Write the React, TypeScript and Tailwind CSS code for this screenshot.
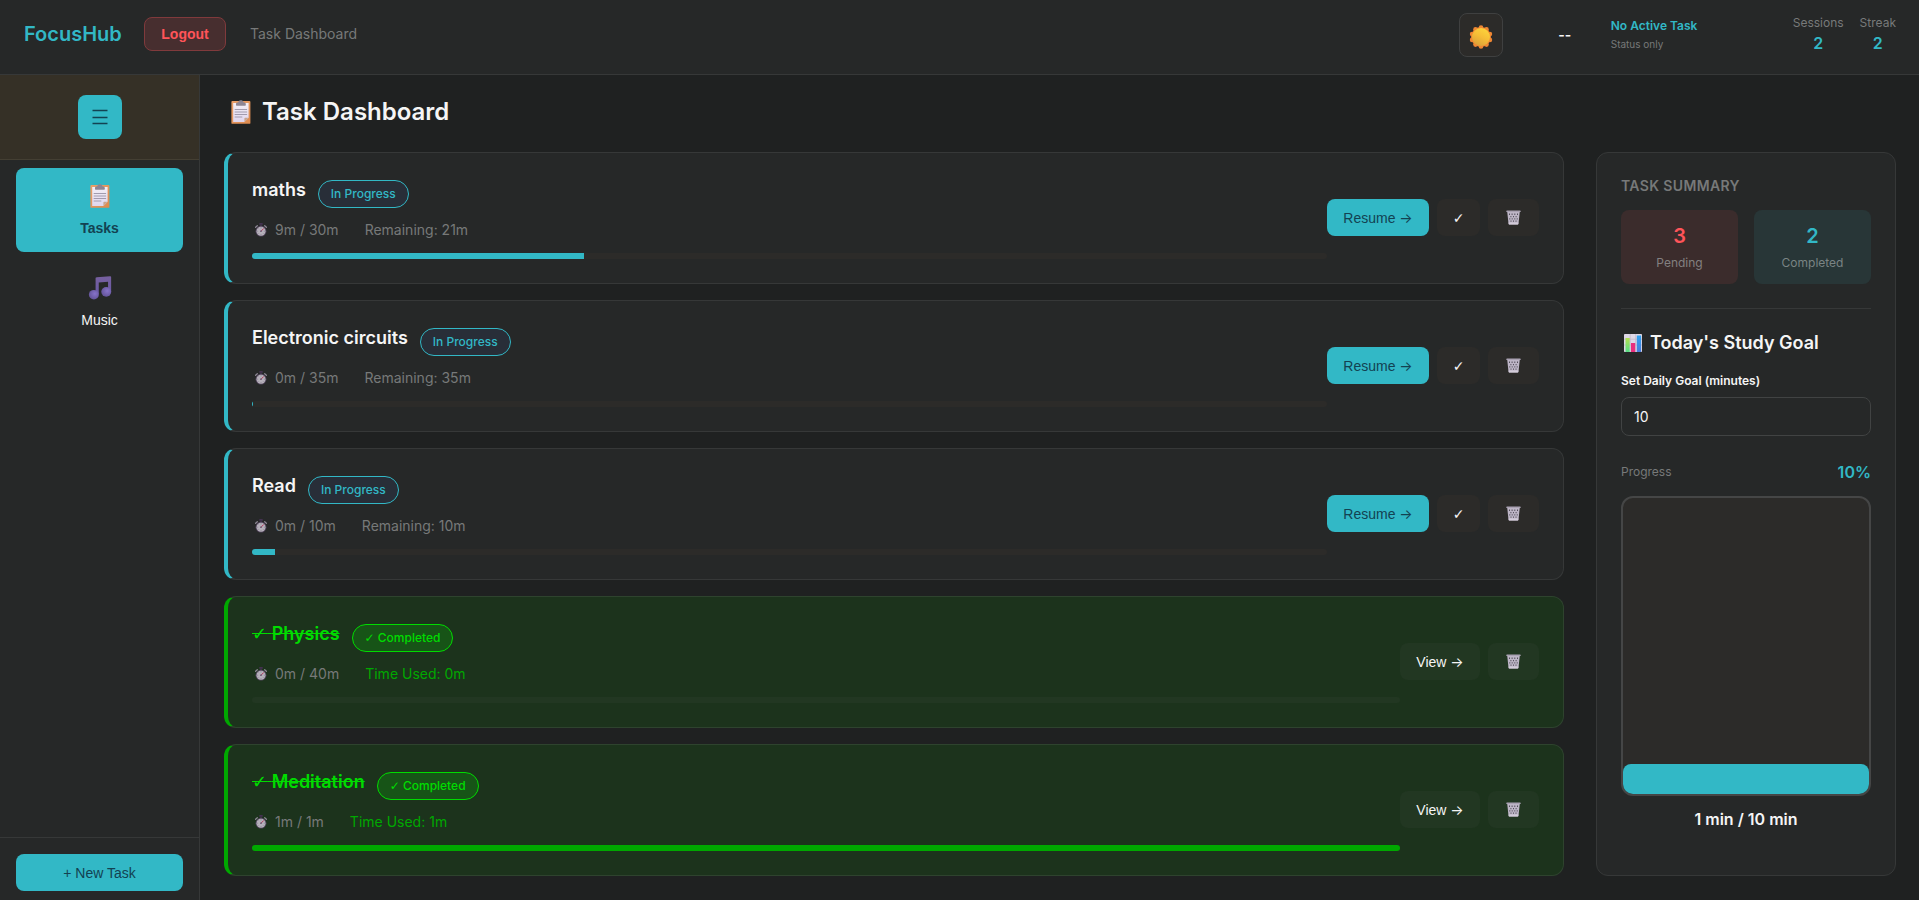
import React, { useState } from 'react';
import clsx from 'clsx';

interface IconProps {
  className?: string;
}

interface Task {
  id: number;
  name: string;
  spent: number;
  total: number;
  percent: number;
  done: boolean;
}

const TASKS: Task[] = [
  { id: 1, name: 'maths', spent: 9, total: 30, percent: 30.9, done: false },
  { id: 2, name: 'Electronic circuits', spent: 0, total: 35, percent: 0.1, done: false },
  { id: 3, name: 'Read', spent: 0, total: 10, percent: 2.1, done: false },
  { id: 4, name: 'Physics', spent: 0, total: 40, percent: 0, done: true },
  { id: 5, name: 'Meditation', spent: 1, total: 1, percent: 100, done: true },
];

function ClipboardIcon({ className }: IconProps) {
  return (
    <svg viewBox="0 0 20 24" className={className} aria-hidden="true">
      <defs>
        <linearGradient id="board" x1="0" y1="0" x2="1" y2="1">
          <stop offset="0" stopColor="#e9a06a" />
          <stop offset="1" stopColor="#dd8a4e" />
        </linearGradient>
        <linearGradient id="sheet" x1="0" y1="0" x2="0" y2="1">
          <stop offset="0" stopColor="#f3eff6" />
          <stop offset="1" stopColor="#e0d6ee" />
        </linearGradient>
      </defs>
      <rect x="0.4" y="1" width="19" height="22.8" rx="0.9" fill="url(#board)" />
      <path d="M2.2 3h15.4v14.8L13.4 22H2.2z" fill="url(#sheet)" />
      <path d="M17.6 17.8L13.4 22v-3.4c0-.5.3-.8.8-.8z" fill="#c9a58f" />
      <path d="M5 4.2c0-1.4.7-1.8 2.4-1.9C7.6.9 8.6.3 9.9.3s2.3.6 2.5 2c1.7.1 2.4.5 2.4 1.9v.9c0 .4-.2.6-.6.6H5.600c-.4 0-.6-.2-.6-.6z" fill="#8d8593" />
      <path d="M3.700 9.500h12.400M3.700 12h12.400M3.700 14.500h12.400M3.700 17h7.600" stroke="#9a93a6" strokeWidth="0.9" />
    </svg>
  );
}

function MusicIcon({ className }: IconProps) {
  return (
    <svg viewBox="0 0 24 25" className={className} aria-hidden="true">
      <defs>
        <linearGradient id="note" x1="0" y1="0" x2="0" y2="1">
          <stop offset="0" stopColor="#76609f" />
          <stop offset="1" stopColor="#6a5aa6" />
        </linearGradient>
        <radialGradient id="head" cx="0.6" cy="0.4" r="0.7">
          <stop offset="0" stopColor="#8672c9" />
          <stop offset="1" stopColor="#5f5093" />
        </radialGradient>
      </defs>
      <path d="M7.400 2.700c0-.8.4-1.200 1.200-1.300L22.400.3c.7 0 1.200.3 1.200 1v15h-3.200V6L10.700 6.900v12H7.400z" fill="url(#note)" />
      <ellipse cx="5.600" cy="19.500" rx="5.200" ry="5" fill="url(#head)" />
      <ellipse cx="18.500" cy="16.500" rx="5.200" ry="5" fill="url(#head)" />
    </svg>
  );
}

function SunIcon({ className }: IconProps) {
  return (
    <svg viewBox="0 0 24 24" className={className} aria-hidden="true">
      <defs>
        <linearGradient id="disc" x1="0.8" y1="0" x2="0.3" y2="1">
          <stop offset="0" stopColor="#fcd63c" />
          <stop offset="0.5" stopColor="#f6bd36" />
          <stop offset="1" stopColor="#dba03a" />
        </linearGradient>
      </defs>
      <g fill="#f08733">
        <circle cx="12" cy="12" r="10" />
        <circle cx="12" cy="2.600" r="2.300" />
        <circle cx="17.500" cy="4.400" r="2.300" />
        <circle cx="20.900" cy="9.100" r="2.300" />
        <circle cx="20.900" cy="14.900" r="2.300" />
        <circle cx="17.500" cy="19.600" r="2.300" />
        <circle cx="12" cy="21.400" r="2.300" />
        <circle cx="6.500" cy="19.600" r="2.300" />
        <circle cx="3.100" cy="14.900" r="2.300" />
        <circle cx="3.100" cy="9.100" r="2.300" />
        <circle cx="6.500" cy="4.400" r="2.300" />
      </g>
      <circle cx="12" cy="12" r="9" fill="url(#disc)" />
    </svg>
  );
}

function StopwatchIcon({ className }: IconProps) {
  return (
    <svg viewBox="0 0 12 14" className={className} aria-hidden="true">
      <rect x="4.200" y="0" width="3.600" height="1.700" rx="0.500" fill="#43324f" />
      <path d="M5.300 1.500h1.400v1.700H5.300z" fill="#43324f" />
      <path d="M.6 4.200l1.700-1.500M11.400 4.200L9.700 2.700" stroke="#8b8593" strokeWidth="1.300" strokeLinecap="round" />
      <circle cx="6" cy="8.200" r="5.400" fill="#54475f" />
      <circle cx="6" cy="8.200" r="4.500" fill="#b5b0ba" />
      <path d="M6 4.300v1M6 11.100v1M2.100 8.200h1M8.900 8.200h1M3.300 5.500l.6.600M3.300 10.900l.6-.6M8.700 10.900l-.6-.6" stroke="#7b7484" strokeWidth="0.600" />
      <path d="M6 8.200l2.500-2.500" stroke="#b8385a" strokeWidth="1" strokeLinecap="round" />
      <circle cx="6" cy="8.200" r="0.900" fill="#6b5f77" />
    </svg>
  );
}

function TrashIcon({ className }: IconProps) {
  return (
    <svg viewBox="0 0 15 15" className={className} aria-hidden="true">
      <path d="M1.200 1.500h12.600l-1.300 12.300c0 .5-.4.7-.8.7H3.300c-.4 0-.8-.2-.8-.7z" fill="#bdb5c6" />
      <rect x="0.300" y="0.400" width="14.400" height="1.700" rx="0.700" fill="#aaa2b3" />
      <g fill="#55505c">
        <path d="M3 3.600h1v1.300H3zM5.600 3.600h1v1.300h-1zM8.300 3.600h1v1.300h-1zM11 3.600h1v1.300h-1z" />
        <path d="M4.400 5.900h1v1.300h-1zM7 5.900h1v1.300H7zM9.600 5.900h1v1.300h-1z" />
        <path d="M3.300 8.200h1v1.300h-1zM5.700 8.200h1v1.300h-1zM8.300 8.200h1v1.300h-1zM10.700 8.200h1v1.300h-1z" />
        <path d="M4.500 10.500h1v1.300h-1zM7 10.500h1v1.300H7zM9.500 10.500h1v1.300h-1z" />
      </g>
      <path d="M2.600 12.600h9.800l-.2 1.300c0 .4-.3.600-.7.600h-8c-.4 0-.7-.2-.7-.6z" fill="#d3ccda" />
    </svg>
  );
}

function ChartIcon({ className }: IconProps) {
  return (
    <svg viewBox="0 0 18 18" className={className} aria-hidden="true">
      <defs>
        <linearGradient id="green" x1="0" y1="0" x2="0" y2="1">
          <stop offset="0" stopColor="#b5e051" />
          <stop offset="1" stopColor="#55dc86" />
        </linearGradient>
        <linearGradient id="blue" x1="0" y1="0" x2="0" y2="1">
          <stop offset="0" stopColor="#2ea3f0" />
          <stop offset="1" stopColor="#4b7bdb" />
        </linearGradient>
      </defs>
      <rect width="18" height="18" rx="0.800" fill="#ded8e6" />
      <path d="M0 5.200h18M0 11h18M6.200 0v18M11.700 0v18" stroke="#bdb5c9" strokeWidth="0.700" />
      <rect x="1.500" y="4" width="4.200" height="14" fill="url(#green)" />
      <rect x="7" y="9" width="4.200" height="9" fill="#ea2f7d" />
      <rect x="12.800" y="1.500" width="4.300" height="16.500" fill="url(#blue)" />
    </svg>
  );
}

function Check() {
  return <span className="font-['DejaVu_Sans',sans-serif] font-normal">✓</span>;
}

function Arrow() {
  return <span className="font-['Inter',sans-serif]">→</span>;
}

function Stat({ label, value }: { label: string; value: number }) {
  return (
    <div className="text-center">
      <div className="text-xs text-[#787a7a]">{label}</div>
      <div className="text-base leading-6 font-semibold text-[#32b8c6]">{value}</div>
    </div>
  );
}

function TaskCard({ task }: { task: Task }) {
  const buttonBg = task.done ? 'bg-[#223722]' : 'bg-[#2c2b29]';

  return (
    <li
      className={clsx(
        'flex items-center rounded-xl border border-l-4 p-6',
        task.done
          ? 'bg-[#1c331c] border-[#2e432e] border-l-[#00a800]'
          : 'bg-[#262828] border-[#363838] border-l-[#32b8c6]'
      )}
    >
      <div className="flex-1">
        <div className="flex items-start gap-3">
          <h3
            className={clsx(
              'text-lg leading-[26px] font-semibold',
              task.done ? 'text-[#00dc00] line-through' : 'text-[#f5f5f5]'
            )}
          >
            {task.done && <><Check /> </>}
            {task.name}
          </h3>
          <span
            className={clsx(
              'mt-[3px] rounded-full border px-3 py-[5px] text-xs font-medium',
              task.done
                ? 'bg-[#175417] border-[#00dc00] text-[#00dc00]'
                : 'bg-[#282e38] border-[#32b8c6] text-[#32b8c6]'
            )}
          >
            {task.done ? <><Check /> Completed</> : 'In Progress'}
          </span>
        </div>
        <div className="mt-[11px] flex gap-[26px] text-sm leading-[21px] text-[#777979]">
          <span className="flex items-center gap-2 pl-[3px]">
            <StopwatchIcon className="h-[14px] w-3" />
            {task.spent}m / {task.total}m
          </span>
          {task.done ? (
            <span className="text-[#00a800]">Time Used: {task.spent}m</span>
          ) : (
            <span>Remaining: {task.total - task.spent}m</span>
          )}
        </div>
        <div className={clsx('mt-[13px] h-[6px] overflow-hidden rounded-full', buttonBg)}>
          <div
            className={clsx('h-full', task.done ? 'bg-[#00a800]' : 'bg-[#32b8c6]')}
            style={{ width: `${task.percent}%` }}
          />
        </div>
      </div>

      <div className="flex gap-2 pb-px font-['Liberation_Sans',sans-serif] text-sm">
        {task.done ? (
          <button className={clsx('h-[37px] w-20 rounded-lg text-[#f5f5f5]', buttonBg)}>
            View <Arrow />
          </button>
        ) : (
          <>
            <button className="h-[37px] w-[102px] rounded-lg bg-[#32b8c6] text-[#134252]">
              Resume <Arrow />
            </button>
            <button aria-label="Mark complete" className={clsx('h-[37px] w-[43px] rounded-lg text-[#f5f5f5]', buttonBg)}>
              <Check />
            </button>
          </>
        )}
        <button aria-label="Delete task" className={clsx('flex h-[37px] w-[51px] items-center justify-center rounded-lg', buttonBg)}>
          <TrashIcon className="h-[15px] w-[15px]" />
        </button>
      </div>
    </li>
  );
}

export default function App() {
  const [goal, setGoal] = useState('10');

  return (
    <div className="flex min-h-screen flex-col bg-[#1f2121] font-['Inter',sans-serif] text-[#f5f5f5]">
      <header className="flex items-center justify-between border-b border-[#363838] bg-[#262828] pt-[13px] pr-[23px] pb-[17px] pl-6">
        <div className="flex items-center gap-6 pb-[2px]">
          <div className="w-24 text-xl font-semibold whitespace-nowrap text-[#32b8c6]">FocusHub</div>
          <button className="h-[34px] w-[82px] rounded-lg border border-[#803a3c] bg-[#472e2f] font-['Liberation_Sans',sans-serif] text-sm font-bold text-[#ff5459]">
            Logout
          </button>
          <div className="text-sm text-[#777979]">Task Dashboard</div>
        </div>
        <div className="flex items-center">
          <button
            aria-label="Toggle theme"
            className="flex h-11 w-11 items-center justify-center rounded-lg border border-[#3f4040] bg-[#2c2b29]"
          >
            <SunIcon className="mt-1 h-6 w-6" />
          </button>
          <div className="ml-8 w-[60px] text-center text-sm font-semibold">--</div>
          <div className="ml-4 w-[150px]">
            <div className="text-xs leading-[18px] font-semibold text-[#32b8c6]">No Active Task</div>
            <div className="text-[10px] leading-[18px] text-[#777979]">Status only</div>
          </div>
          <div className="ml-8 flex gap-4">
            <Stat label="Sessions" value={2} />
            <Stat label="Streak" value={2} />
          </div>
        </div>
      </header>

      <div className="flex flex-1">
        <nav className="flex w-[200px] shrink-0 flex-col border-r border-[#363838] bg-[#262828]">
          <div className="flex justify-center border-b border-[#443f33] bg-[#353026] p-5">
            <button aria-label="Toggle sidebar" className="flex h-11 w-11 items-center justify-center rounded-lg bg-[#32b8c6]">
              <svg viewBox="0 0 16 16" className="h-4 w-4" aria-hidden="true">
                <path d="M.5 1.500h15M.5 8.500h15M.5 14.500h15" stroke="#134252" strokeWidth="1.300" />
              </svg>
            </button>
          </div>
          <div className="flex flex-1 flex-col gap-2 px-4 py-2 font-['Liberation_Sans',sans-serif] text-sm">
            <button className="flex h-[84px] flex-col items-center gap-[10px] rounded-lg bg-[#32b8c6] pt-4 font-bold text-[#134252]">
              <ClipboardIcon className="h-6 w-5" />
              Tasks
            </button>
            <button className="flex h-[84px] flex-col items-center gap-[10px] rounded-lg pt-4">
              <MusicIcon className="h-6 w-6" />
              Music
            </button>
          </div>
          <div className="border-t border-[#363838] px-4 pt-4 pb-[9px]">
            <button className="h-[37px] w-full rounded-lg bg-[#32b8c6] font-['Liberation_Sans',sans-serif] text-sm text-[#134252]">
              + New Task
            </button>
          </div>
        </nav>

        <main className="min-w-0 flex-1 pt-[21px] pr-[23px] pl-6">
          <h1 className="mb-6 flex items-center gap-[11px] pl-[7px] text-2xl leading-8 font-semibold">
            <ClipboardIcon className="h-6 w-5" />
            Task Dashboard
          </h1>

          <div className="flex gap-8">
            <ul className="flex flex-1 flex-col gap-4">
              {TASKS.map((task) => (
                <TaskCard key={task.id} task={task} />
              ))}
            </ul>

            <aside className="w-[300px] shrink-0 rounded-xl border border-[#363838] bg-[#262828] p-6">
              <h2 className="text-sm leading-[17px] font-semibold tracking-wide text-[#777979] uppercase">Task Summary</h2>
              <div className="mt-4 grid grid-cols-2 gap-4 text-center">
                <div className="rounded-lg bg-[#3b2c2c] py-3">
                  <div className="text-xl leading-7 font-semibold text-[#ff5459]">3</div>
                  <div className="mt-1 text-xs leading-[18px] text-[#838080]">Pending</div>
                </div>
                <div className="rounded-lg bg-[#283637] py-3">
                  <div className="text-xl leading-7 font-semibold text-[#32b8c6]">2</div>
                  <div className="mt-1 text-xs leading-[18px] text-[#7a8484]">Completed</div>
                </div>
              </div>

              <hr className="my-6 border-[#363838]" />

              <h3 className="flex items-center gap-2 pl-[3px] text-lg leading-5 font-semibold">
                <ChartIcon className="h-[18px] w-[18px]" />
                Today's Study Goal
              </h3>
              <label htmlFor="goal" className="mt-5 block text-xs font-semibold">
                Set Daily Goal (minutes)
              </label>
              <input
                id="goal"
                type="text"
                inputMode="numeric"
                value={goal}
                onChange={(e) => setGoal(e.target.value)}
                className="mt-2 h-[39px] w-full rounded-lg border border-[#414343] bg-[#262828] px-3 text-sm"
              />

              <div className="mt-6 flex items-center justify-between">
                <span className="text-xs text-[#777979]">Progress</span>
                <span className="text-base font-semibold text-[#32b8c6]">10%</span>
              </div>
              <div className="mt-3 flex h-[300px] items-end overflow-hidden rounded-xl border-2 border-[#454646] bg-[#2c2b29]">
                <div className="w-full rounded-lg bg-[#32b8c6]" style={{ height: '10%' }} />
              </div>
              <p className="mt-[11px] text-center text-base font-semibold">1 min / 10 min</p>
            </aside>
          </div>
        </main>
      </div>
    </div>
  );
}
